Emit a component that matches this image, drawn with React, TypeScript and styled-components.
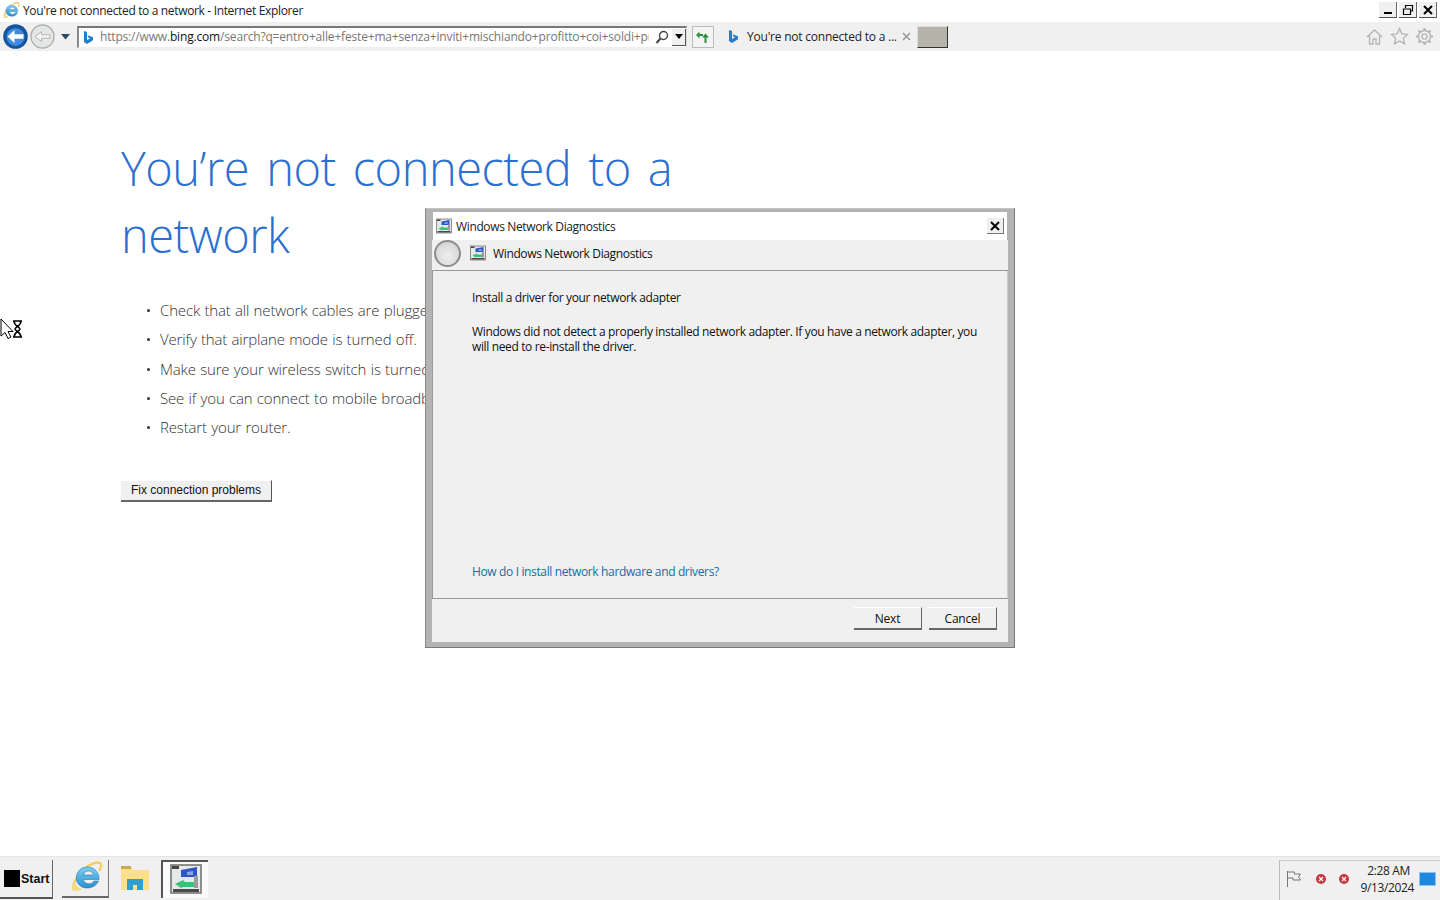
import React from "react";
import styled, { createGlobalStyle } from "styled-components";

const Global = createGlobalStyle`
  html, body { margin: 0; padding: 0; height: 100%; background: #fff; overflow: hidden; }
  #root { height: 100%; }
  * { box-sizing: border-box; }
`;

const UI = `"Open Sans", "Noto Sans", sans-serif`;

const Page = styled.div`
  position: relative;
  width: 1440px;
  height: 900px;
  display: flex;
  flex-direction: column;
  font-family: ${UI};
  color: #111;
  overflow: hidden;
`;

const TitleBar = styled.div`
  height: 22px;
  flex: none;
  display: flex;
  align-items: center;
  padding: 0 3px 1px 3px;
  gap: 3px;
  background: #fff;
`;
const TitleText = styled.div`
  flex: 1;
  font-size: 12px;
  letter-spacing: -0.34px;
  color: #222;
`;
const Caps = styled.div`
  display: flex;
  gap: 2px;
  align-self: flex-start;
  margin-top: 2px;
`;
const Cap = styled.div`
  width: 18px;
  height: 16px;
  background: #f0f0f0;
  border-right: 1px solid #666;
  border-bottom: 1px solid #555;
  display: flex;
  align-items: center;
  justify-content: center;
`;

const Toolbar = styled.div`
  height: 29px;
  flex: none;
  background: #f0f0f0;
  display: flex;
  align-items: center;
  padding-left: 3px;
`;
const Nav = styled.div`
  display: flex;
  align-items: center;
  gap: 2px;
  width: 74px;
`;
const AddressBox = styled.div`
  width: 610px;
  height: 22px;
  background: #fff;
  border-top: 2px solid #777;
  border-left: 2px solid #888;
  border-right: 1px solid #ddd;
  border-bottom: 1px solid #eee;
  display: flex;
  align-items: center;
  padding-left: 3px;
`;
const Url = styled.div`
  width: 550px;
  margin-left: 5px;
  padding-bottom: 1px;
  font-size: 12px;
  color: #777;
  white-space: nowrap;
  overflow: hidden;
  letter-spacing: -0.17px;
`;
const UrlHost = styled.span`
  color: #111;
`;
const SearchBtn = styled.div`
  margin-left: 6px;
  display: flex;
  align-items: center;
`;
const DropBtn = styled.div`
  width: 14px;
  height: 17px;
  margin-left: 3px;
  background: #f0f0f0;
  border-right: 1px solid #555;
  border-bottom: 1px solid #555;
  display: flex;
  align-items: center;
  justify-content: center;
`;
const Refresh = styled.div`
  width: 22px;
  height: 22px;
  margin-left: 5px;
  background: #f4f4f4;
  border: 1px solid #bbb;
  display: flex;
  align-items: center;
  justify-content: center;
`;
const Tab = styled.div`
  display: flex;
  align-items: center;
  margin-left: 13px;
  width: 187px;
`;
const TabText = styled.div`
  margin-left: 7px;
  width: 155px;
  font-size: 12px;
  letter-spacing: -0.22px;
  white-space: nowrap;
  color: #222;
`;
const NewTab = styled.div`
  width: 31px;
  height: 22px;
  margin-left: 3px;
  background: #b5b3aa;
  border: 1px solid #ddd;
  border-right-color: #333;
  border-bottom-color: #333;
`;
const ToolIcons = styled.div`
  margin-left: auto;
  display: flex;
  gap: 6px;
  padding-right: 6px;
`;

const Content = styled.main`
  flex: 1;
  background: #fff;
  padding: 84px 0 0 121px;
`;
const Heading = styled.h1`
  margin: 0;
  width: 620px;
  font-family: ${UI};
  font-weight: 300;
  font-size: 47px;
  line-height: 67px;
  color: #2b6fd1;
  letter-spacing: -0.5px;
  word-spacing: 5.4px;
`;
const Tips = styled.ul`
  margin: 27px 0 0;
  padding: 0 0 0 25px;
  list-style: none;
`;
const Tip = styled.li`
  position: relative;
  height: 29.3px;
  padding-left: 14px;
  font-size: 15px;
  font-weight: 300;
  line-height: 29px;
  letter-spacing: -0.15px;
  word-spacing: 0.6px;
  color: #333;
  white-space: nowrap;
  &::before {
    content: "";
    position: absolute;
    left: 1px;
    top: 13px;
    width: 3px;
    height: 3px;
    border-radius: 50%;
    background: #333;
  }
`;
const FixButton = styled.button`
  display: block;
  margin-top: 38px;
  width: 151px;
  height: 22px;
  padding: 0 0 1px;
  background: #f0f0f0;
  border: none;
  border-right: 1px solid #555;
  border-bottom: 2px solid #666;
  border-top: 1px solid #fff;
  font-family: "Liberation Sans", Arial, sans-serif;
  font-size: 12px;
  color: #111;
`;

const Taskbar = styled.footer`
  height: 44px;
  flex: none;
  background: #f0f0f0;
  border-top: 1px solid #e4e4e4;
  display: flex;
  align-items: center;
`;
const StartBtn = styled.div`
  width: 53px;
  height: 39px;
  margin-top: 2px;
  padding-left: 4px;
  background: #f0f0f0;
  border-right: 1px solid #666;
  border-bottom: 2px solid #555;
  display: flex;
  align-items: center;
  gap: 1px;
  font-family: "Liberation Sans", Arial, sans-serif;
  font-size: 12.5px;
  font-weight: 700;
`;
const StartBox = styled.span`
  width: 16px;
  height: 17px;
  background: #000;
`;
const TaskBtn = styled.div<{ $active?: boolean; $raised?: boolean }>`
  width: 47px;
  height: 38px;
  margin-top: 1px;
  margin-left: ${(p) => (p.$active ? "5px" : "0")};
  padding-bottom: 2px;
  padding-left: ${(p) => (p.$active ? "0" : "4px")};
  display: flex;
  align-items: center;
  justify-content: center;
  background: ${(p) => (p.$active ? "#fafafa" : "#f0f0f0")};
  border-right: ${(p) => (p.$raised ? "1px solid #777" : "none")};
  border-bottom: ${(p) => (p.$raised ? "2px solid #666" : "none")};
  border-left: ${(p) => (p.$active ? "2px solid #555" : "none")};
  border-top: ${(p) => (p.$active ? "2px solid #555" : "none")};
`;
const Gap = styled.div`
  width: 9px;
`;
const Tray = styled.div`
  margin-left: auto;
  height: 40px;
  margin-top: 3px;
  width: 161px;
  border-left: 1px solid #bbb;
  border-top: 1px solid #ccc;
  display: flex;
  align-items: center;
  padding: 0 0 4px 5px;
`;
const Clock = styled.div`
  width: 58px;
  margin-left: 7px;
  text-align: right;
  font-size: 12px;
  line-height: 17px;
  letter-spacing: -0.36px;
  color: #222;
`;
const ClockTime = styled.span`
  margin-right: 4px;
`;
const ShowDesk = styled.div`
  width: 17px;
  height: 14px;
  margin-left: 5px;
  background: #1e88e0;
  border: 1px solid #8cc4ee;
`;

const Dialog = styled.div`
  position: absolute;
  left: 425px;
  top: 208px;
  width: 590px;
  height: 440px;
  background: #b3b3b3;
  border: 1px solid #777;
  border-top-color: #c4c4c4;
  border-left-color: #8a8a8a;
  padding: 3px 6px 5px 6px;
  display: flex;
  flex-direction: column;
  font-size: 12px;
  letter-spacing: -0.36px;
`;
const DlgTitle = styled.div`
  height: 28px;
  flex: none;
  margin: 0 1px;
  background: #fff;
  display: flex;
  align-items: center;
  padding-left: 3px;
  gap: 4px;
`;
const DlgTitleText = styled.div`
  flex: 1;
  color: #222;
`;
const DlgClose = styled.div`
  width: 17px;
  height: 16px;
  margin-right: 3px;
  background: #f0f0f0;
  border-right: 1px solid #777;
  border-bottom: 1px solid #777;
  display: flex;
  align-items: center;
  justify-content: center;
`;
const DlgHead = styled.div`
  height: 31px;
  flex: none;
  background: #f0f0f0;
  display: flex;
  align-items: center;
  border-bottom: 1px solid #999;
  padding: 0 0 4px 2px;
`;
const BackBall = styled.div`
  width: 27px;
  height: 27px;
  margin-right: 9px;
  border-radius: 50%;
  background: radial-gradient(circle at 50% 60%, #eee, #cfcfcf);
  border: 2px solid #8e8e8e;
`;
const DlgHeadText = styled.div`
  margin-left: 7px;
  color: #111;
`;
const DlgBody = styled.div`
  flex: 1;
  background: #f0f0f0;
  border-left: 1px solid #999;
  border-right: 1px solid #ccc;
  padding: 19px 24px 0 39px;
  display: flex;
  flex-direction: column;
`;
const Lead = styled.p`
  margin: 0 0 19px;
  line-height: 15px;
  color: #111;
`;
const Para = styled.p`
  margin: 0;
  line-height: 15px;
  color: #111;
`;
const HelpLink = styled.a`
  margin-top: auto;
  margin-bottom: 19px;
  line-height: 15px;
  color: #1a6aa8;
`;
const DlgFoot = styled.div`
  height: 44px;
  flex: none;
  background: #f0f0f0;
  border-top: 1px solid #999;
  display: flex;
  justify-content: flex-end;
  gap: 7px;
  align-items: flex-start;
  padding: 8px 11px 0 0;
`;
const DlgBtn = styled.button`
  width: 68px;
  height: 23px;
  padding: 0;
  background: #f0f0f0;
  border: none;
  border-right: 1px solid #666;
  border-bottom: 2px solid #666;
  border-top: 1px solid #fff;
  font-family: ${UI};
  font-size: 12px;
  letter-spacing: -0.2px;
  color: #111;
`;
const CursorWrap = styled.div`
  position: absolute;
  left: 0;
  top: 318px;
`;

const BingIcon = ({ s = 13 }: { s?: number }) => (
  <svg width={s} height={s + 2} viewBox="0 0 13 15">
    <path d="M2 1l3 1v8l3-1.6-1.6-.8-.9-2.4 5.5 2v3L5 14l-3-2z" fill="#1f7fd0" />
  </svg>
);

const IeIcon = ({ s, id }: { s: number; id: string }) => (
  <svg width={s} height={s} viewBox="0 0 32 32">
    <defs>
      <linearGradient id={id} x1="0" y1="0" x2="0" y2="1">
        <stop offset="0" stopColor="#7fd0f0" />
        <stop offset="1" stopColor="#2a8fd0" />
      </linearGradient>
    </defs>
    <path d="M3 29C0 25 7 11 18 4.500c5-3 10.500-4 12-1.500 1 2-.5 4.500-2 7" fill="none" stroke="#f2cd5a" strokeWidth="2.200" />
    <path d="M16 6a11.500 11.500 0 0 1 12 12.500H12.500c.5 5 8 6 10.500 1.500h4.500C24 29 8 30 5.500 19 4.500 11 10 6 16 6zm-3.500 8h10c-1-5.500-9-5.500-10 0z" fill={`url(#${id})`} stroke="#1f78b8" strokeWidth=".6" />
    <path d="M1.500 22.500C1 27 2.500 31 7 30c2-.4 3-1 4-2-3-.6-5-2.500-6-5" fill="#f6dc8a" />
  </svg>
);

const NetIcon = ({ s }: { s: number }) => (
  <svg width={s} height={s} viewBox="0 0 32 32">
    <rect x="1" y="2" width="30" height="28" fill="#e6e9ea" stroke="#6c6c6c" strokeWidth="1.500" />
    <rect x="2" y="3" width="7" height="3" fill="#444" />
    <path d="M11 7l16-3v10H11z" fill="#2f55c8" />
    <path d="M17 9l6-1v4h-6z" fill="#8aa4ea" />
    <path d="M5 21l8-4 2 2h9v5H13l-2 1z" fill="#3cc07a" />
    <rect x="24" y="13" width="4" height="12" fill="#9a9a9a" />
    <rect x="3" y="26" width="26" height="3" fill="#4a4a4a" />
  </svg>
);

const ErrDot = styled.span`
  width: 10px;
  height: 10px;
  margin-left: 13px;
  display: flex;
`;
const ErrIcon = () => (
  <ErrDot>
    <svg width="10" height="10" viewBox="0 0 10 10">
      <circle cx="5" cy="5" r="5" fill="#c8383f" />
      <path d="M3 3l4 4M7 3l-4 4" stroke="#fff" strokeWidth="1.2" />
    </svg>
  </ErrDot>
);

const tips = [
  "Check that all network cables are plugged in.",
  "Verify that airplane mode is turned off.",
  "Make sure your wireless switch is turned on.",
  "See if you can connect to mobile broadband.",
  "Restart your router.",
];

export default function App() {
  return (
    <Page>
      <Global />
      <TitleBar>
        <IeIcon s={17} id="ieSmall" />
        <TitleText>You're not connected to a network - Internet Explorer</TitleText>
        <Caps>
          <Cap>
            <svg width="10" height="10" viewBox="0 0 10 10"><rect x="1" y="7" width="8" height="2" fill="#000" /></svg>
          </Cap>
          <Cap>
            <svg width="12" height="10" viewBox="0 0 12 10"><path d="M1.500 4h7v5.500h-7zM3.500 3V.5h7v5.500H9" fill="none" stroke="#000" strokeWidth="1.2" /></svg>
          </Cap>
          <Cap>
            <svg width="10" height="10" viewBox="0 0 10 10"><path d="M1 1l8 8M9 1l-8 8" stroke="#000" strokeWidth="2" /></svg>
          </Cap>
        </Caps>
      </TitleBar>
      <Toolbar>
        <Nav>
          <svg width="25" height="25" viewBox="0 0 25 25">
            <circle cx="12.5" cy="12.5" r="12.300" fill="#16549f" />
            <circle cx="12.5" cy="13" r="9" fill="#3f8be0" />
            <path d="M4.500 12.500l7-6.500v4.200h9v4.600h-9V19z" fill="#fff" />
          </svg>
          <svg width="25" height="25" viewBox="0 0 25 25">
            <circle cx="12.5" cy="12.5" r="11.500" fill="#e4e6e6" stroke="#aeb0b0" strokeWidth="1.400" />
            <path d="M5 12.500l6.500-5v3.300H20v3.400h-8.500v3.300z" fill="#f7f7f7" stroke="#b4b4b4" />
          </svg>
          <svg width="11" height="7" viewBox="0 0 11 7" style={{ marginLeft: 3 }}>
            <path d="M1 1h9L5.500 6.500z" fill="#2d4a63" />
          </svg>
        </Nav>
        <AddressBox>
          <BingIcon />
          <Url>
            https://www.<UrlHost>bing.com</UrlHost>/search?q=entro+alle+feste+ma+senza+inviti+mischiando+profitto+coi+soldi+profitto
          </Url>
          <SearchBtn>
            <svg width="14" height="14" viewBox="0 0 14 14">
              <circle cx="8.5" cy="5.5" r="4" fill="none" stroke="#444" strokeWidth="1.4" />
              <path d="M5.500 8.500L1.500 13" stroke="#444" strokeWidth="2" />
            </svg>
          </SearchBtn>
          <DropBtn>
            <svg width="8" height="5" viewBox="0 0 8 5"><path d="M0 0h8L4 5z" fill="#000" /></svg>
          </DropBtn>
        </AddressBox>
        <Refresh>
          <svg width="14" height="14" viewBox="0 0 14 14">
            <path d="M0 5l3.500-3.500V4H7v2H3.500v2.500z" fill="#2f8f3a" />
            <path d="M13 7.500L9.500 3.500 6 7.500h2.500V13h2V7.500z" fill="#2f8f3a" />
          </svg>
        </Refresh>
        <Tab>
          <BingIcon />
          <TabText>You're not connected to a ...</TabText>
          <svg width="9" height="9" viewBox="0 0 9 9">
            <path d="M1 1l7 7M8 1l-7 7" stroke="#999" strokeWidth="1.6" />
          </svg>
        </Tab>
        <NewTab />
        <ToolIcons>
          <svg width="19" height="19" viewBox="0 0 19 19" fill="none" stroke="#b4b4b4" strokeWidth="1.3">
            <path d="M2 10l7.500-7 7.500 7M4.500 8.500V17H8v-5h3v5h3.500V8.500" />
          </svg>
          <svg width="19" height="19" viewBox="0 0 19 19" fill="none" stroke="#b4b4b4" strokeWidth="1.3">
            <path d="M9.500 1.500l2.400 5.300 5.700.6-4.300 3.800 1.300 5.700-5.100-3-5.100 3 1.300-5.700-4.300-3.800 5.700-.6z" />
          </svg>
          <svg width="19" height="19" viewBox="0 0 19 19" fill="none" stroke="#b4b4b4" strokeWidth="1.3">
            <circle cx="9.5" cy="9.5" r="2.6" />
            <circle cx="9.5" cy="9.5" r="6" />
            <path d="M9.500 1v2.500M9.500 15.500V18M1 9.500h2.500M15.500 9.500H18M3.500 3.500l1.800 1.800M13.700 13.700l1.800 1.800M15.500 3.500l-1.800 1.800M5.300 13.700l-1.800 1.800" strokeWidth="2.200" />
          </svg>
        </ToolIcons>
      </Toolbar>
      <Content>
        <Heading>You’re not connected to a network</Heading>
        <Tips>
          {tips.map((t) => (
            <Tip key={t}>{t}</Tip>
          ))}
        </Tips>
        <FixButton>Fix connection problems</FixButton>
      </Content>
      <Taskbar>
        <StartBtn>
          <StartBox />
          Start
        </StartBtn>
        <Gap />
        <TaskBtn $raised>
          <IeIcon s={32} id="ieLarge" />
        </TaskBtn>
        <TaskBtn>
          <svg width="30" height="26" viewBox="0 0 30 26">
            <path d="M1 2h10l2 3h16v20H1z" fill="#fde08a" />
            <path d="M1 1h10v3H1z" fill="#c9a94f" />
            <path d="M7 14h16v11h-6v-5h-4v5H7z" fill="#2f9fd3" />
          </svg>
        </TaskBtn>
        <TaskBtn $active>
          <NetIcon s={32} />
        </TaskBtn>
        <Tray>
          <svg width="18" height="18" viewBox="0 0 18 18" fill="none" stroke="#777">
            <path d="M2.500 1v16M2.500 2h7v2h6l-2 3 2 3H8V8H2.500" />
          </svg>
          <ErrIcon />
          <ErrIcon />
          <Clock>
            <ClockTime>2:28 AM</ClockTime>
            <br />
            9/13/2024
          </Clock>
          <ShowDesk />
        </Tray>
      </Taskbar>
      <CursorWrap>
        <svg width="24" height="24" viewBox="0 0 24 24">
          <path d="M1 1v17l4-3.500 3 6 3-1.500-3-5.500h5z" fill="#fff" stroke="#000" />
          <path d="M13 3h9M13 19h9M14 3c0 5 6 6 6 8s-6 3-6 8M21 3c0 5-6 6-6 8s6 3 6 8" fill="#fff" stroke="#000" strokeWidth="1.500" />
        </svg>
      </CursorWrap>
      <Dialog>
        <DlgTitle>
          <NetIcon s={16} />
          <DlgTitleText>Windows Network Diagnostics</DlgTitleText>
          <DlgClose>
            <svg width="10" height="10" viewBox="0 0 10 10"><path d="M1 1l8 8M9 1l-8 8" stroke="#000" strokeWidth="2" /></svg>
          </DlgClose>
        </DlgTitle>
        <DlgHead>
          <BackBall />
          <NetIcon s={16} />
          <DlgHeadText>Windows Network Diagnostics</DlgHeadText>
        </DlgHead>
        <DlgBody>
          <Lead>Install a driver for your network adapter</Lead>
          <Para>
            Windows did not detect a properly installed network adapter. If you have a network adapter, you will need to re-install the driver.
          </Para>
          <HelpLink>How do I install network hardware and drivers?</HelpLink>
        </DlgBody>
        <DlgFoot>
          <DlgBtn>Next</DlgBtn>
          <DlgBtn>Cancel</DlgBtn>
        </DlgFoot>
      </Dialog>
    </Page>
  );
}
